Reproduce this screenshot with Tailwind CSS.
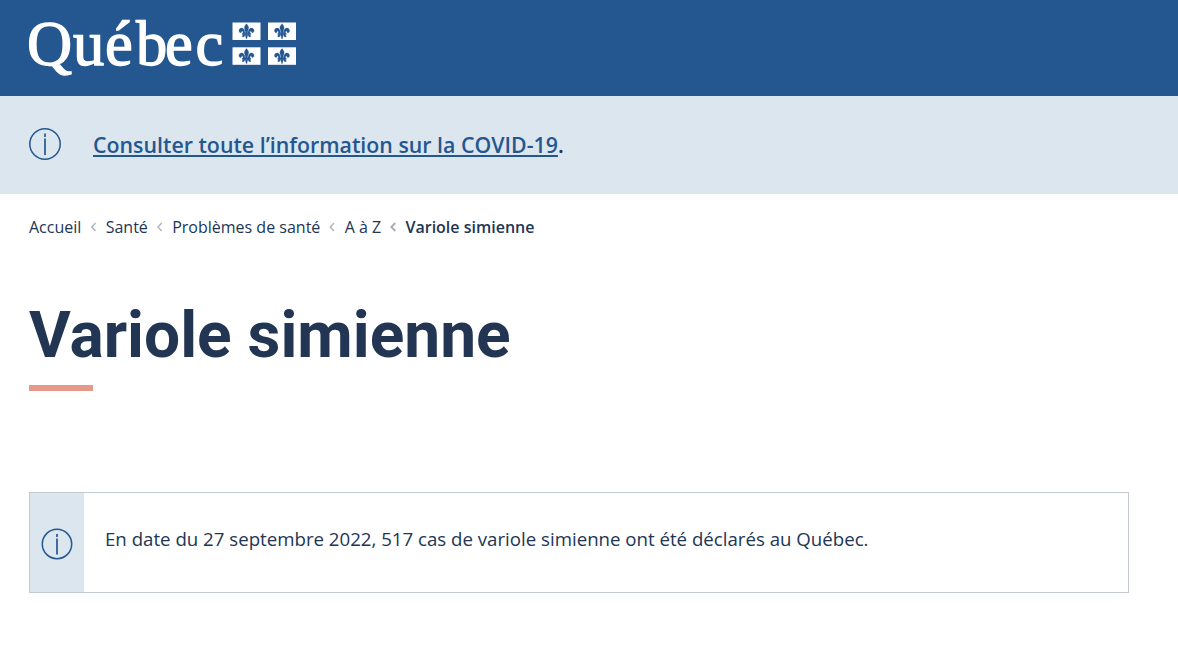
<!DOCTYPE html>
<html lang="fr">
<head>
<meta charset="utf-8">
<title>Variole simienne</title>
<script src="https://cdn.jsdelivr.net/npm/@tailwindcss/browser@4"></script>
</head>
<body class="bg-white text-[#223654] font-['Open_Sans',sans-serif] h-[658px] overflow-hidden">
<header class="h-24 bg-[#245790] pl-[29px] pt-5">
  <svg class="w-[268px] h-[58px] overflow-visible" viewBox="29 20 268 58" role="img" aria-label="Québec">
    <defs>
      <g id="flag">
        <rect width="28" height="17.5" fill="#fff"/>
        <g fill="#245790" stroke="#245790" stroke-width=".35">
          <path d="M14 1.3C12.6 3 11.7 4.3 11.9 5.8C12.2 7.4 13 8.4 13.1 10.7H14.9C15 8.4 15.8 7.4 16.1 5.8C16.3 4.3 15.4 3 14 1.3Z"/>
          <path d="M12.5 11C12.4 8.2 11.3 5.6 9.1 5.6C7 5.6 6 7.6 6.7 9.2C7.3 10.5 8.7 10.5 9 9.4C9 8.7 9.3 8.2 9.9 8.6C10.6 9 10.6 10 10.5 11Z"/>
          <path d="M15.5 11C15.6 8.2 16.7 5.6 18.9 5.6C21 5.6 22 7.6 21.3 9.2C20.7 10.5 19.3 10.5 19 9.4C19 8.7 18.7 8.2 18.1 8.6C17.4 9 17.4 10 17.5 11Z"/>
          <path d="M9.8 10.7H18.2V12.2H9.8Z"/>
          <path d="M12.9 12H15.1C15 13.8 14.8 14.9 14 16.6C13.2 14.9 13 13.8 12.9 12Z"/>
          <path d="M12.5 12C12.4 13.7 11.4 14.8 10 14.4C9.5 13.6 10 13 10.9 12ZM15.5 12C15.6 13.7 16.6 14.8 18 14.4C18.5 13.6 18 13 17.1 12Z"/>
        </g>
      </g>
    </defs>
    <text x="27 73 105 136 165 195.5" y="65" fill="#fff" stroke="#fff" stroke-width="1.3" font-size="62.5" class="font-['Liberation_Serif',serif]">Québec</text>
    <use href="#flag" x="232.5" y="22.5"/>
    <use href="#flag" x="268" y="22.5"/>
    <use href="#flag" x="232.5" y="47.3"/>
    <use href="#flag" x="268" y="47.3"/>
  </svg>
</header>
<section class="h-[98px] bg-[#dce6ee] flex items-center pl-[29px] gap-8">
  <svg class="w-8 h-8 shrink-0 -mt-0.5" viewBox="0 0 32 32" fill="none" stroke="#245790"><circle cx="16" cy="16" r="15.2" stroke-width="1.5"/><path d="M16 10.5V27M16 5.5V9" stroke-width="1.7"/></svg>
  <p class="text-[21.33px] leading-8 font-semibold whitespace-nowrap"><a class="text-[#245790] underline decoration-2 underline-offset-2" href="#">Consulter toute l’information sur la COVID-19</a>.</p>
</section>
<nav class="flex items-center h-6 mt-[21px] pl-[29px] text-[16px] leading-6 whitespace-nowrap">
  <a href="#">Accueil</a>
  <svg class="w-[24.35px] h-3" viewBox="0 0 24.35 12" fill="none" stroke="#b0b5be" stroke-width="1.5"><path d="M14.5 2L10.8 6L14.5 10"/></svg>
  <a href="#">Santé</a>
  <svg class="w-[24.35px] h-3" viewBox="0 0 24.35 12" fill="none" stroke="#b0b5be" stroke-width="1.5"><path d="M13.7 2L10 6L13.7 10"/></svg>
  <a href="#">Problèmes de santé</a>
  <svg class="w-[24.35px] h-3" viewBox="0 0 24.35 12" fill="none" stroke="#b0b5be" stroke-width="1.5"><path d="M14 2L10.3 6L14 10"/></svg>
  <a href="#">A à Z</a>
  <svg class="w-[24.35px] h-3" viewBox="0 0 24.35 12" fill="none" stroke="#a6acb6" stroke-width="1.8"><path d="M14.3 2L10.3 6L14.3 10"/></svg>
  <span class="font-semibold">Variole simienne</span>
</nav>
<main class="pl-[29px]">
  <h1 class="font-['Roboto',sans-serif] font-bold text-[64px] leading-[72px] mt-[61px]">Variole simienne</h1>
  <div class="w-16 h-1.5 bg-[#e4998a] mt-[13px]"></div>
  <div class="mt-[101px] w-[1100px] h-[101px] border border-[#c5cad2] flex">
    <div class="w-[54px] bg-[#dce6ee] flex items-center justify-center pt-[3px]">
      <svg class="w-8 h-8" viewBox="0 0 32 32" fill="none" stroke="#245790"><circle cx="16" cy="16" r="14.7" stroke-width="1.5"/><path d="M16 10.5V26.5M16 6V9" stroke-width="1.7"/></svg>
    </div>
    <p class="pl-[21px] pt-8 text-[18.67px] leading-7 whitespace-nowrap">En date du 27 septembre 2022, 517 cas de variole simienne ont été déclarés au Québec.</p>
  </div>
</main>
</body>
</html>
